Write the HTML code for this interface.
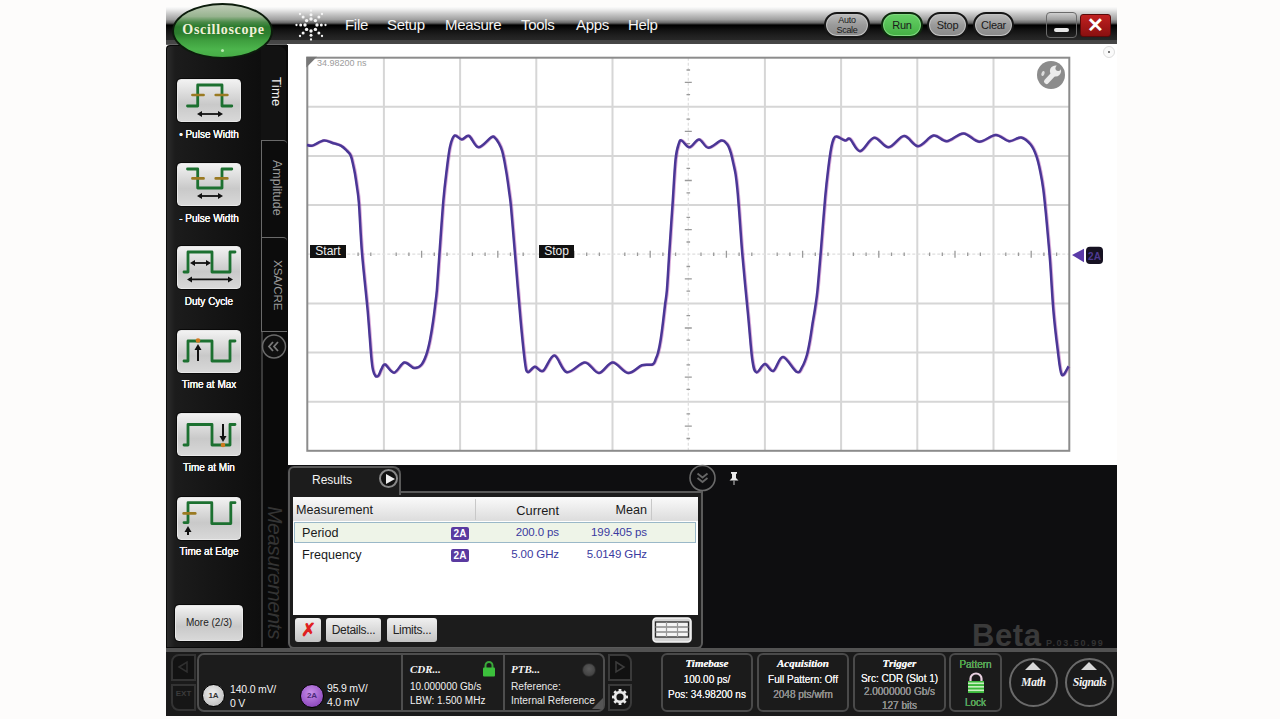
<!DOCTYPE html>
<html><head><meta charset="utf-8">
<style>
*{box-sizing:border-box}
html,body{margin:0;padding:0}
body{width:1280px;height:719px;background:#fdfcfb;position:relative;overflow:hidden;font-family:"Liberation Sans",sans-serif}
.a{position:absolute}
.menu{position:absolute;top:16px;color:#f4f4f4;font-size:15px;line-height:18px;letter-spacing:-0.3px}
.pill{position:absolute;top:12px;height:26px;border-radius:13px;border:2px solid #161616;background:linear-gradient(#bdbdbd,#9a9a9a 50%,#8a8a8a);box-shadow:inset 0 0 0 1px #c2c2c2;color:#1a1a1a;font-size:11px;text-align:center;line-height:22px;letter-spacing:-0.3px}
.mbtn{position:absolute;left:177px;width:64px;height:43px;border-radius:4px;background:linear-gradient(#f2f2f2,#c9c9c9 60%,#d8d8d8);border:1px solid #e8e8e8;box-shadow:0 0 0 1px #0a0a0a}
.mlab{position:absolute;left:160px;width:98px;text-align:center;color:#f4f4f4;font-size:10px;line-height:12px;text-shadow:0 0 0.6px #fff,0 0 0.3px #fff}
.vtab{position:absolute;color:#aaa;font-size:11px;transform-origin:0 0;transform:rotate(90deg);white-space:nowrap}
.box{position:absolute;top:653px;height:59px;border:2px solid #4a4a4a;border-radius:6px;background:#1b1b1b;color:#eee;font-size:10px;text-align:center;line-height:15px;text-shadow:0 0 0.5px #fff}
.hd{font-family:"Liberation Serif",serif;font-weight:bold;font-style:italic;font-size:11px;color:#f4f4f4}
.gr{color:#7c7c7c}
</style></head><body>

<!-- title bar -->
<div class="a" style="left:166px;top:7px;width:951px;height:38px;background:linear-gradient(#fbfbfb 0px,#f0f0f0 2px,#c8c8c8 7px,#a0a0a0 12.5px,#646464 16px,#1a1a1a 17.5px,#000 18.5px,#141414 24px,#202020 29px,#262626 32.5px,#444 33.5px,#474747 36.5px,#777 38px)"></div>
<!-- scope white area -->
<div class="a" style="left:287px;top:44px;width:830px;height:421px;background:#fff"></div>

<!-- left panel -->
<div class="a" style="left:166px;top:45px;width:122px;height:603px;background:#0a0a0a;border-radius:4px 0 0 0"></div>
<div class="a" style="left:167px;top:46px;width:94px;height:601px;background:linear-gradient(90deg,#2c2c2c,#1c1c1c 8px,#161616 40px,#0e0e0e 94px);border-radius:4px 0 0 0"></div>
<div class="a" style="left:261px;top:46px;width:26px;height:94px;background:#121212;border-radius:0 9px 0 0"></div>
<div class="a" style="left:261px;top:331px;width:1.5px;height:316px;background:#3a3a3a"></div>
<div class="a" style="left:286px;top:46px;width:2px;height:602px;background:#0a0a0a"></div>

<svg width="1280" height="719" style="position:absolute;left:0;top:0">
<path d="M383.9,57.7V450.8M460.1,57.7V450.8M536.3,57.7V450.8M612.5,57.7V450.8M764.9,57.7V450.8M841.1,57.7V450.8M917.3,57.7V450.8M993.5,57.7V450.8M307.3,106.8H1069.3M307.3,156.0H1069.3M307.3,205.1H1069.3M307.3,303.4H1069.3M307.3,352.5H1069.3M307.3,401.7H1069.3" stroke="#d6d6d6" stroke-width="2" fill="none"/>
<path d="M307.3,254.2H1069.3 M688.3,57.7V450.8" stroke="#dedede" stroke-width="1.2" stroke-dasharray="3,2" fill="none"/>
<path d="M320.0,252.4V256.1M332.7,252.4V256.1M345.4,250.8V257.8M358.1,252.4V256.1M370.8,252.4V256.1M396.2,252.4V256.1M408.9,252.4V256.1M421.6,250.8V257.8M434.3,252.4V256.1M447.0,252.4V256.1M472.4,252.4V256.1M485.1,252.4V256.1M497.8,250.8V257.8M510.5,252.4V256.1M523.2,252.4V256.1M548.6,252.4V256.1M561.3,252.4V256.1M574.0,250.8V257.8M586.7,252.4V256.1M599.4,252.4V256.1M624.8,252.4V256.1M637.5,252.4V256.1M650.2,250.8V257.8M662.9,252.4V256.1M675.6,252.4V256.1M701.0,252.4V256.1M713.7,252.4V256.1M726.4,250.8V257.8M739.1,252.4V256.1M751.8,252.4V256.1M777.2,252.4V256.1M789.9,252.4V256.1M802.6,250.8V257.8M815.3,252.4V256.1M828.0,252.4V256.1M853.4,252.4V256.1M866.1,252.4V256.1M878.8,250.8V257.8M891.5,252.4V256.1M904.2,252.4V256.1M929.6,252.4V256.1M942.3,252.4V256.1M955.0,250.8V257.8M967.7,252.4V256.1M980.4,252.4V256.1M1005.8,252.4V256.1M1018.5,252.4V256.1M1031.2,250.8V257.8M1043.9,252.4V256.1M1056.6,252.4V256.1M686.5,70.0H690.1M684.8,82.3H691.8M686.5,94.6H690.1M686.5,119.1H690.1M684.8,131.4H691.8M686.5,143.7H690.1M686.5,168.3H690.1M684.8,180.5H691.8M686.5,192.8H690.1M686.5,217.4H690.1M684.8,229.7H691.8M686.5,242.0H690.1M686.5,266.5H690.1M684.8,278.8H691.8M686.5,291.1H690.1M686.5,315.7H690.1M684.8,328.0H691.8M686.5,340.2H690.1M686.5,364.8H690.1M684.8,377.1H691.8M686.5,389.4H690.1M686.5,413.9H690.1M684.8,426.2H691.8M686.5,438.5H690.1" stroke="#9a9a9a" stroke-width="1.3" fill="none"/>
<rect x="307.3" y="57.7" width="762.0" height="393.1" fill="none" stroke="#8c8c8c" stroke-width="2"/>
<path d="M306.3,56.7H317L306.3,67.4Z" fill="#777"/>
<path d="M307.0,145.0 C307.9,145.1 309.7,146.3 312.5,145.6 C315.3,144.9 320.4,141.0 323.8,140.6 C327.1,140.2 329.7,142.2 332.5,143.0 C335.3,143.8 338.4,144.4 340.8,145.7 C343.2,147.0 345.1,149.0 346.7,150.6 C348.3,152.2 349.6,153.1 350.6,155.4 C351.7,157.7 352.3,161.1 353.0,164.2 C353.7,167.3 354.4,170.3 355.0,174.0 C355.6,177.7 356.2,181.7 356.9,186.6 C357.5,191.5 358.0,192.1 358.9,203.2 C359.8,214.3 360.5,235.0 362.0,253.0 C363.5,271.0 366.1,293.7 367.7,311.0 C369.2,328.3 370.4,347.2 371.3,357.0 C372.2,366.8 372.3,366.8 373.0,370.0 C373.7,373.2 374.6,375.1 375.5,376.0 C376.4,376.9 377.5,376.7 378.5,375.5 C379.5,374.3 380.4,370.8 381.5,369.0 C382.6,367.2 382.9,363.9 385.0,364.5 C387.1,365.1 390.8,373.0 394.0,372.7 C397.2,372.4 400.9,363.3 404.2,362.5 C407.5,361.7 411.2,367.6 414.0,368.0 C416.8,368.4 419.2,367.2 421.2,365.0 C423.2,362.8 424.7,359.2 426.2,355.0 C427.7,350.8 428.9,345.6 430.0,340.0 C431.1,334.4 432.3,326.9 433.1,321.3 C433.9,315.7 434.4,311.5 435.0,306.3 C435.6,301.1 436.1,298.9 436.9,290.0 C437.6,281.1 438.4,268.0 439.5,253.0 C440.6,238.0 442.2,213.8 443.4,200.0 C444.6,186.2 445.6,178.9 446.7,170.0 C447.8,161.1 448.7,152.4 450.0,146.7 C451.3,141.0 452.6,136.8 454.5,135.6 C456.4,134.4 459.3,139.4 461.7,139.5 C464.1,139.6 466.2,134.7 469.0,136.0 C471.8,137.3 474.7,147.1 478.4,147.3 C482.1,147.5 488.5,138.9 491.2,137.3 C493.9,135.7 493.3,136.6 494.6,137.6 C495.9,138.6 497.6,141.1 498.9,143.3 C500.2,145.6 501.3,148.1 502.2,151.1 C503.1,154.1 503.6,157.2 504.4,161.1 C505.1,165.0 505.9,169.6 506.7,174.4 C507.4,179.2 508.2,184.4 508.9,190.0 C509.6,195.6 510.1,197.1 511.1,207.8 C512.1,218.5 513.4,234.7 515.0,254.0 C516.6,273.3 519.2,305.5 520.9,323.6 C522.6,341.7 523.9,354.4 525.0,362.5 C526.1,370.6 526.2,371.5 527.8,372.2 C529.4,372.9 532.3,366.9 534.8,366.7 C537.3,366.5 539.8,372.8 543.0,370.9 C546.2,369.0 550.3,355.4 554.3,355.6 C558.3,355.8 561.7,371.1 566.8,372.2 C571.9,373.3 579.6,362.4 584.9,362.5 C590.2,362.6 594.2,373.0 598.8,373.0 C603.4,373.0 607.8,362.5 612.7,362.5 C617.6,362.5 623.1,372.5 628.0,373.0 C632.9,373.5 637.8,366.7 641.9,365.3 C646.0,363.9 650.2,365.5 652.5,364.5 C654.8,363.5 654.7,361.4 655.6,359.4 C656.5,357.4 657.3,355.7 658.1,352.5 C658.9,349.3 659.8,345.2 660.6,340.0 C661.4,334.8 662.4,327.1 663.1,321.3 C663.8,315.5 664.4,310.2 665.0,305.0 C665.6,299.8 666.2,298.5 666.9,290.0 C667.6,281.5 668.3,268.2 669.2,254.0 C670.1,239.8 671.4,220.8 672.5,205.0 C673.6,189.2 674.5,169.3 675.6,159.0 C676.7,148.7 677.9,146.5 678.9,143.4 C679.9,140.3 679.9,139.9 681.7,140.6 C683.5,141.2 686.6,147.5 689.5,147.3 C692.4,147.1 695.9,139.4 699.0,139.5 C702.1,139.6 704.7,147.6 708.4,147.8 C712.1,148.0 718.1,141.2 721.2,140.6 C724.3,140.0 725.6,142.5 727.2,144.4 C728.8,146.3 729.6,149.0 730.6,152.2 C731.6,155.3 732.5,159.6 733.3,163.3 C734.1,167.0 735.0,170.3 735.6,174.4 C736.2,178.5 736.7,182.2 737.2,187.8 C737.8,193.4 738.0,196.8 738.9,207.8 C739.8,218.8 740.8,236.1 742.3,254.0 C743.8,271.9 746.4,297.7 748.1,315.3 C749.8,332.9 750.9,350.3 752.3,359.8 C753.7,369.3 754.3,371.7 756.4,372.4 C758.5,373.1 762.0,364.2 764.8,364.0 C767.6,363.8 770.2,372.2 773.2,371.0 C776.2,369.8 779.0,356.8 782.9,357.0 C786.8,357.2 793.5,370.4 796.8,372.0 C800.1,373.6 800.8,369.1 802.5,366.3 C804.2,363.5 805.6,359.4 806.9,355.0 C808.1,350.6 809.1,345.2 810.0,340.0 C810.9,334.8 811.7,329.0 812.5,323.8 C813.3,318.6 814.2,314.4 815.0,308.8 C815.8,303.2 816.6,299.1 817.5,290.0 C818.4,280.9 819.3,269.5 820.6,254.0 C821.9,238.5 823.9,211.4 825.2,197.0 C826.5,182.6 827.4,175.4 828.4,167.3 C829.4,159.2 830.2,153.2 831.1,148.4 C832.0,143.6 832.9,140.4 833.9,138.4 C834.9,136.4 835.4,136.3 837.3,136.7 C839.1,137.1 842.9,140.2 845.0,140.6 C847.1,141.0 847.5,137.2 850.0,139.0 C852.5,140.8 856.0,151.4 860.0,151.2 C864.0,151.0 869.2,138.5 874.0,137.8 C878.8,137.2 883.5,147.6 888.5,147.3 C893.5,147.0 899.1,136.3 904.0,136.1 C908.9,135.9 913.1,146.3 918.0,146.2 C922.9,146.1 928.7,136.4 933.5,135.6 C938.3,134.8 941.7,141.6 946.7,141.2 C951.7,140.8 958.0,133.3 963.4,133.4 C968.8,133.5 973.6,141.4 979.0,141.7 C984.4,142.0 990.6,135.1 995.6,135.0 C1000.6,134.9 1004.8,140.8 1009.0,141.2 C1013.2,141.6 1017.4,136.9 1021.0,137.5 C1024.6,138.1 1028.0,141.4 1030.6,144.5 C1033.2,147.6 1034.8,151.6 1036.4,156.2 C1038.0,160.8 1039.2,166.3 1040.3,171.8 C1041.4,177.3 1042.4,182.5 1043.3,189.3 C1044.2,196.1 1045.0,204.6 1045.8,212.7 C1046.6,220.8 1047.4,229.9 1048.1,238.0 C1048.8,246.1 1049.2,249.6 1050.1,261.5 C1051.0,273.4 1052.1,294.9 1053.3,309.4 C1054.5,323.9 1056.1,337.4 1057.5,348.3 C1058.9,359.2 1059.9,371.7 1061.7,374.7 C1063.5,377.7 1067.4,367.8 1068.6,366.4" stroke="#b04ab0" stroke-width="3" fill="none" stroke-linejoin="round" transform="translate(0.7,0)" opacity="0.45"/>
<path d="M307.0,145.0 C307.9,145.1 309.7,146.3 312.5,145.6 C315.3,144.9 320.4,141.0 323.8,140.6 C327.1,140.2 329.7,142.2 332.5,143.0 C335.3,143.8 338.4,144.4 340.8,145.7 C343.2,147.0 345.1,149.0 346.7,150.6 C348.3,152.2 349.6,153.1 350.6,155.4 C351.7,157.7 352.3,161.1 353.0,164.2 C353.7,167.3 354.4,170.3 355.0,174.0 C355.6,177.7 356.2,181.7 356.9,186.6 C357.5,191.5 358.0,192.1 358.9,203.2 C359.8,214.3 360.5,235.0 362.0,253.0 C363.5,271.0 366.1,293.7 367.7,311.0 C369.2,328.3 370.4,347.2 371.3,357.0 C372.2,366.8 372.3,366.8 373.0,370.0 C373.7,373.2 374.6,375.1 375.5,376.0 C376.4,376.9 377.5,376.7 378.5,375.5 C379.5,374.3 380.4,370.8 381.5,369.0 C382.6,367.2 382.9,363.9 385.0,364.5 C387.1,365.1 390.8,373.0 394.0,372.7 C397.2,372.4 400.9,363.3 404.2,362.5 C407.5,361.7 411.2,367.6 414.0,368.0 C416.8,368.4 419.2,367.2 421.2,365.0 C423.2,362.8 424.7,359.2 426.2,355.0 C427.7,350.8 428.9,345.6 430.0,340.0 C431.1,334.4 432.3,326.9 433.1,321.3 C433.9,315.7 434.4,311.5 435.0,306.3 C435.6,301.1 436.1,298.9 436.9,290.0 C437.6,281.1 438.4,268.0 439.5,253.0 C440.6,238.0 442.2,213.8 443.4,200.0 C444.6,186.2 445.6,178.9 446.7,170.0 C447.8,161.1 448.7,152.4 450.0,146.7 C451.3,141.0 452.6,136.8 454.5,135.6 C456.4,134.4 459.3,139.4 461.7,139.5 C464.1,139.6 466.2,134.7 469.0,136.0 C471.8,137.3 474.7,147.1 478.4,147.3 C482.1,147.5 488.5,138.9 491.2,137.3 C493.9,135.7 493.3,136.6 494.6,137.6 C495.9,138.6 497.6,141.1 498.9,143.3 C500.2,145.6 501.3,148.1 502.2,151.1 C503.1,154.1 503.6,157.2 504.4,161.1 C505.1,165.0 505.9,169.6 506.7,174.4 C507.4,179.2 508.2,184.4 508.9,190.0 C509.6,195.6 510.1,197.1 511.1,207.8 C512.1,218.5 513.4,234.7 515.0,254.0 C516.6,273.3 519.2,305.5 520.9,323.6 C522.6,341.7 523.9,354.4 525.0,362.5 C526.1,370.6 526.2,371.5 527.8,372.2 C529.4,372.9 532.3,366.9 534.8,366.7 C537.3,366.5 539.8,372.8 543.0,370.9 C546.2,369.0 550.3,355.4 554.3,355.6 C558.3,355.8 561.7,371.1 566.8,372.2 C571.9,373.3 579.6,362.4 584.9,362.5 C590.2,362.6 594.2,373.0 598.8,373.0 C603.4,373.0 607.8,362.5 612.7,362.5 C617.6,362.5 623.1,372.5 628.0,373.0 C632.9,373.5 637.8,366.7 641.9,365.3 C646.0,363.9 650.2,365.5 652.5,364.5 C654.8,363.5 654.7,361.4 655.6,359.4 C656.5,357.4 657.3,355.7 658.1,352.5 C658.9,349.3 659.8,345.2 660.6,340.0 C661.4,334.8 662.4,327.1 663.1,321.3 C663.8,315.5 664.4,310.2 665.0,305.0 C665.6,299.8 666.2,298.5 666.9,290.0 C667.6,281.5 668.3,268.2 669.2,254.0 C670.1,239.8 671.4,220.8 672.5,205.0 C673.6,189.2 674.5,169.3 675.6,159.0 C676.7,148.7 677.9,146.5 678.9,143.4 C679.9,140.3 679.9,139.9 681.7,140.6 C683.5,141.2 686.6,147.5 689.5,147.3 C692.4,147.1 695.9,139.4 699.0,139.5 C702.1,139.6 704.7,147.6 708.4,147.8 C712.1,148.0 718.1,141.2 721.2,140.6 C724.3,140.0 725.6,142.5 727.2,144.4 C728.8,146.3 729.6,149.0 730.6,152.2 C731.6,155.3 732.5,159.6 733.3,163.3 C734.1,167.0 735.0,170.3 735.6,174.4 C736.2,178.5 736.7,182.2 737.2,187.8 C737.8,193.4 738.0,196.8 738.9,207.8 C739.8,218.8 740.8,236.1 742.3,254.0 C743.8,271.9 746.4,297.7 748.1,315.3 C749.8,332.9 750.9,350.3 752.3,359.8 C753.7,369.3 754.3,371.7 756.4,372.4 C758.5,373.1 762.0,364.2 764.8,364.0 C767.6,363.8 770.2,372.2 773.2,371.0 C776.2,369.8 779.0,356.8 782.9,357.0 C786.8,357.2 793.5,370.4 796.8,372.0 C800.1,373.6 800.8,369.1 802.5,366.3 C804.2,363.5 805.6,359.4 806.9,355.0 C808.1,350.6 809.1,345.2 810.0,340.0 C810.9,334.8 811.7,329.0 812.5,323.8 C813.3,318.6 814.2,314.4 815.0,308.8 C815.8,303.2 816.6,299.1 817.5,290.0 C818.4,280.9 819.3,269.5 820.6,254.0 C821.9,238.5 823.9,211.4 825.2,197.0 C826.5,182.6 827.4,175.4 828.4,167.3 C829.4,159.2 830.2,153.2 831.1,148.4 C832.0,143.6 832.9,140.4 833.9,138.4 C834.9,136.4 835.4,136.3 837.3,136.7 C839.1,137.1 842.9,140.2 845.0,140.6 C847.1,141.0 847.5,137.2 850.0,139.0 C852.5,140.8 856.0,151.4 860.0,151.2 C864.0,151.0 869.2,138.5 874.0,137.8 C878.8,137.2 883.5,147.6 888.5,147.3 C893.5,147.0 899.1,136.3 904.0,136.1 C908.9,135.9 913.1,146.3 918.0,146.2 C922.9,146.1 928.7,136.4 933.5,135.6 C938.3,134.8 941.7,141.6 946.7,141.2 C951.7,140.8 958.0,133.3 963.4,133.4 C968.8,133.5 973.6,141.4 979.0,141.7 C984.4,142.0 990.6,135.1 995.6,135.0 C1000.6,134.9 1004.8,140.8 1009.0,141.2 C1013.2,141.6 1017.4,136.9 1021.0,137.5 C1024.6,138.1 1028.0,141.4 1030.6,144.5 C1033.2,147.6 1034.8,151.6 1036.4,156.2 C1038.0,160.8 1039.2,166.3 1040.3,171.8 C1041.4,177.3 1042.4,182.5 1043.3,189.3 C1044.2,196.1 1045.0,204.6 1045.8,212.7 C1046.6,220.8 1047.4,229.9 1048.1,238.0 C1048.8,246.1 1049.2,249.6 1050.1,261.5 C1051.0,273.4 1052.1,294.9 1053.3,309.4 C1054.5,323.9 1056.1,337.4 1057.5,348.3 C1058.9,359.2 1059.9,371.7 1061.7,374.7 C1063.5,377.7 1067.4,367.8 1068.6,366.4" stroke="#4a3796" stroke-width="2.5" fill="none" stroke-linejoin="round"/>
</svg>

<!-- green ellipse -->
<div class="a" style="left:172px;top:3px;width:101px;height:56px;border-radius:50%;border:2.5px solid #0c1c0c;background:linear-gradient(#c0ccb8 0%,#98b490 22%,#4a8a48 33%,#2a7a2c 42%,#2c7e2e 55%,#3e9e3e 68%,#4cb44c 85%,#46ac46 100%);overflow:hidden">
  <div class="a" style="left:1.5px;top:16.5px;width:96px;text-align:center;font-family:'Liberation Serif',serif;font-weight:bold;font-size:14px;color:#f0f0d8;letter-spacing:0.7px;line-height:16px">Oscilloscope</div>
  <div class="a" style="left:47px;top:44px;width:3px;height:3px;border-radius:50%;background:#b8e8b0"></div>
</div>

<!-- spark logo -->
<svg class="a" style="left:295px;top:9px" width="32" height="34" viewBox="0 0 32 34">
 <g fill="#f4f4f4"><circle cx="22.0" cy="16.0" r="1.70"/><circle cx="26.3" cy="16.0" r="1.50"/><circle cx="30.5" cy="16.0" r="1.15"/><circle cx="20.4" cy="20.4" r="1.70"/><circle cx="23.9" cy="23.9" r="1.50"/><circle cx="27.0" cy="27.0" r="1.15"/><circle cx="16.0" cy="22.0" r="1.70"/><circle cx="16.0" cy="26.3" r="1.50"/><circle cx="16.0" cy="30.5" r="1.15"/><circle cx="11.6" cy="20.4" r="1.70"/><circle cx="8.1" cy="23.9" r="1.50"/><circle cx="5.0" cy="27.0" r="1.15"/><circle cx="10.0" cy="16.0" r="1.70"/><circle cx="5.7" cy="16.0" r="1.50"/><circle cx="1.5" cy="16.0" r="1.15"/><circle cx="11.6" cy="11.6" r="1.70"/><circle cx="8.1" cy="8.1" r="1.50"/><circle cx="5.0" cy="5.0" r="1.15"/><circle cx="16.0" cy="10.0" r="1.70"/><circle cx="16.0" cy="5.7" r="1.50"/><circle cx="16.0" cy="1.5" r="1.15"/><circle cx="20.4" cy="11.6" r="1.70"/><circle cx="23.9" cy="8.1" r="1.50"/><circle cx="27.0" cy="5.0" r="1.15"/></g>
</svg>

<!-- menu -->
<div class="menu" style="left:345px">File</div>
<div class="menu" style="left:387px">Setup</div>
<div class="menu" style="left:445px">Measure</div>
<div class="menu" style="left:521px">Tools</div>
<div class="menu" style="left:576px">Apps</div>
<div class="menu" style="left:628px">Help</div>

<!-- pills -->
<div class="pill" style="left:824px;width:46px;line-height:9.5px;padding-top:2px;font-size:9px">Auto<br>Scale</div>
<div class="pill" style="left:881px;width:42px;background:linear-gradient(#66d066,#44b044);border-color:#0e2a0e;box-shadow:inset 0 0 0 1px #80d880">Run</div>
<div class="pill" style="left:927px;width:41px">Stop</div>
<div class="pill" style="left:973px;width:41px">Clear</div>
<div class="a" style="left:1046px;top:12px;width:31px;height:26px;border-radius:4px;border:1.5px solid #6a6a6a"><div class="a" style="left:7px;top:15px;width:15px;height:4px;border-radius:2px;background:#e8e8e8"></div></div>
<div class="a" style="left:1080px;top:14px;width:31px;height:23px;border-radius:3px;background:linear-gradient(#c02020,#8a1010);border:1px solid #5a0a0a;color:#fff;font-size:20px;line-height:21px;text-align:center;font-weight:bold">&#10005;</div>
<div class="a" style="left:1103px;top:46px;width:12px;height:12px;border-radius:50%;border:1px solid #ddd;background:#fafafa"><div class="a" style="left:4px;top:4px;width:2px;height:2px;background:#777"></div></div>

<!-- wrench -->
<div class="a" style="left:1037px;top:61px;width:28px;height:28px;border-radius:50%;background:#8c8c8c"></div>
<svg class="a" style="left:1037px;top:61px" width="28" height="28" viewBox="0 0 28 28"><path d="M9.5,20.5 L17,12.5" stroke="#ececec" stroke-width="5" stroke-linecap="round"/><circle cx="18.5" cy="10" r="5.6" fill="#ececec"/><circle cx="21.2" cy="7.2" r="2.7" fill="#8c8c8c"/><ellipse cx="6" cy="12.5" rx="1.5" ry="2.6" fill="#dcdcdc" transform="rotate(20 6 12.5)"/></svg>

<!-- graticule label -->
<div class="a" style="left:317px;top:58px;font-size:9px;color:#9c9c9c;line-height:11px">34.98200 ns</div>
<div class="a" style="left:310px;top:245px;width:36px;height:13px;background:#111;color:#eee;font-size:12px;line-height:13px;text-align:center">Start</div>
<div class="a" style="left:539px;top:245px;width:35px;height:13px;background:#111;color:#eee;font-size:12px;line-height:13px;text-align:center">Stop</div>
<svg class="a" style="left:1070px;top:245px" width="36" height="22"><path d="M2,10 L14,3.8 L14,17.2 Z" fill="#5a3aa8"/><rect x="16" y="1.7" width="17" height="17.2" rx="4" fill="#161222"/><text x="24.5" y="14.5" font-size="10" fill="#4e3a92" text-anchor="middle" font-family="Liberation Sans" font-weight="bold">2A</text></svg>

<!-- left buttons -->
<div class="mbtn" style="top:79px"></div>
<svg class="a" style="left:177px;top:79px" width="64" height="43"><path d="M10.5,27H20.7V6H45V27H54.8" stroke="#1c7030" stroke-width="2.8" fill="none" stroke-linejoin="round" stroke-linecap="round"/><path d="M15.4,16H26.6 M38.7,16H50.4" stroke="#9a7a22" stroke-width="2.6" stroke-linecap="round"/><path d="M22,35H44" stroke="#111" stroke-width="1.8"/><path d="M20,35L25,32V38Z M46,35L41,32V38Z" fill="#111"/></svg>
<div class="mlab" style="top:129px">• Pulse Width</div>
<div class="mbtn" style="top:163px"></div>
<svg class="a" style="left:177px;top:163px" width="64" height="43"><path d="M10.5,6H20.7V25H45V6H54.8" stroke="#1c7030" stroke-width="2.8" fill="none" stroke-linejoin="round" stroke-linecap="round"/><path d="M15.4,15.4H26.6 M38.7,15.4H50.4" stroke="#9a7a22" stroke-width="2.6" stroke-linecap="round"/><path d="M22,33H44" stroke="#111" stroke-width="1.8"/><path d="M20,33L25,30V36Z M46,33L41,30V36Z" fill="#111"/></svg>
<div class="mlab" style="top:213px">- Pulse Width</div>
<div class="mbtn" style="top:246px"></div>
<svg class="a" style="left:177px;top:246px" width="64" height="43"><path d="M7,26H11V6H35V26H53V6H58" stroke="#1c7030" stroke-width="2.8" fill="none" stroke-linejoin="round" stroke-linecap="round"/><path d="M15,17H32" stroke="#111" stroke-width="1.8"/><path d="M13,17L18,14V20Z M34,17L29,14V20Z" fill="#111"/><path d="M12,33.4H54" stroke="#111" stroke-width="1.8"/><path d="M10,33.4L15,30.4V36.4Z M56,33.4L51,30.4V36.4Z" fill="#111"/></svg>
<div class="mlab" style="top:296px">Duty Cycle</div>
<div class="mbtn" style="top:330px"></div>
<svg class="a" style="left:177px;top:330px" width="64" height="43"><path d="M7,31H11V11H35V31H53V11H58" stroke="#1c7030" stroke-width="2.8" fill="none" stroke-linejoin="round" stroke-linecap="round"/><path d="M21,17V31" stroke="#111" stroke-width="2"/><path d="M21,14L17.5,20H24.5Z" fill="#111"/><circle cx="21" cy="10.5" r="2.3" fill="#d07a20"/></svg>
<div class="mlab" style="top:379px">Time at Max</div>
<div class="mbtn" style="top:413px"></div>
<svg class="a" style="left:177px;top:413px" width="64" height="43"><path d="M7,32H11V11.5H35V32H53V11.5H58" stroke="#1c7030" stroke-width="2.8" fill="none" stroke-linejoin="round" stroke-linecap="round"/><path d="M46,26V11" stroke="#111" stroke-width="2"/><path d="M46,29L42.5,23H49.5Z" fill="#111"/><circle cx="46" cy="32" r="2.3" fill="#d07a20"/></svg>
<div class="mlab" style="top:462px">Time at Min</div>
<div class="mbtn" style="top:497px"></div>
<svg class="a" style="left:177px;top:497px" width="64" height="43"><path d="M7,25.6H11V5.7H34.8V26.6H53.8V5.7H58" stroke="#1c7030" stroke-width="2.8" fill="none" stroke-linejoin="round" stroke-linecap="round"/><path d="M6.6,16.4H18.3" stroke="#9a7a22" stroke-width="2.6" stroke-linecap="round"/><path d="M11,32V38" stroke="#111" stroke-width="2"/><path d="M11,29L7.5,35H14.5Z" fill="#111"/></svg>
<div class="mlab" style="top:546px">Time at Edge</div>
<div class="mbtn" style="top:605px;left:175px;width:68px;height:36px;font-size:10px;color:#222;text-align:center;line-height:34px">More (2/3)</div>

<!-- tabs -->
<div class="vtab" style="left:284px;top:77px;color:#f0f0f0;font-size:13px;letter-spacing:0.3px">Time</div>
<div class="a" style="left:261px;top:140px;width:26px;height:98px;border:1.5px solid #6a6a6a;border-right:none;border-bottom:none;border-radius:0 4px 0 0;background:#0c0c0c"></div>
<div class="vtab" style="left:284px;top:160px;font-size:12.5px;color:#9a9a9a">Amplitude</div>
<div class="a" style="left:261px;top:237px;width:26px;height:95px;border:1.5px solid #6a6a6a;border-right:none;border-radius:0 4px 0 0;background:#0c0c0c"></div>
<div class="vtab" style="left:284px;top:260px;font-size:11.5px;color:#9a9a9a">XSA/CRE</div>
<svg class="a" style="left:260px;top:333px" width="28" height="28"><circle cx="14" cy="13.5" r="11.5" fill="#0f0f0f" stroke="#6a6a6a" stroke-width="1.5"/><path d="M13,9 L9,13.5 L13,18 M18,9 L14,13.5 L18,18" fill="none" stroke="#7a7a7a" stroke-width="1.8"/></svg>
<div class="vtab" style="left:287px;top:506px;font-size:21px;font-style:italic;color:#343434;letter-spacing:-0.5px">Measurements</div>

<!-- results area -->
<div class="a" style="left:287px;top:465px;width:830px;height:183px;background:#0e0e10"></div>
<div class="a" style="left:288px;top:493px;width:415px;height:156px;border:2px solid #5a5a5a;border-top:none;border-radius:0 0 6px 6px;background:#1c1c1c"></div>
<div class="a" style="left:288px;top:466px;width:113px;height:29px;border:2px solid #5a5a5a;border-bottom:none;border-radius:6px 8px 0 0;background:#1c1c1c"></div>
<div class="a" style="left:400px;top:491px;width:303px;height:2px;background:#5a5a5a"></div>
<div class="a" style="left:312px;top:472px;color:#f2f2f2;font-size:12px;line-height:16px">Results</div>
<div class="a" style="left:379px;top:469px;width:19px;height:19px;border-radius:50%;border:2px solid #888;background:#111"><div class="a" style="left:5px;top:3px;width:0;height:0;border-left:9px solid #eee;border-top:5px solid transparent;border-bottom:5px solid transparent"></div></div>
<svg class="a" style="left:688px;top:464px" width="29" height="29"><circle cx="14.5" cy="14" r="12.5" fill="#0e0e10" stroke="#6a6a6a" stroke-width="1.6"/><path d="M9.5,9.5 L14.5,13.5 L19.5,9.5 M9.5,14 L14.5,18 L19.5,14" fill="none" stroke="#666" stroke-width="1.8"/></svg>
<svg class="a" style="left:728px;top:471px" width="12" height="15"><path d="M3,1 H9 V2.5 L8,3 V7 L10.5,9.5 H1.5 L4,7 V3 L3,2.5 Z" fill="#e8e8e8"/><path d="M6,9.5 V14" stroke="#aaa" stroke-width="1.2"/></svg>

<!-- table -->
<div class="a" style="left:293px;top:497px;width:405px;height:118px;background:#fff"></div>
<div class="a" style="left:293px;top:497px;width:405px;height:24px;background:linear-gradient(#fafafa,#dcdcdc)"></div>
<div class="a" style="left:475px;top:499px;width:1px;height:21px;background:#c8c8c8"></div>
<div class="a" style="left:651px;top:499px;width:1px;height:21px;background:#c8c8c8"></div>
<div class="a" style="left:296px;top:503px;font-size:12.6px;color:#1a1a1a">Measurement</div>
<div class="a" style="left:495px;top:503px;width:64px;text-align:right;font-size:12.8px;color:#1a1a1a">Current</div>
<div class="a" style="left:590px;top:503px;width:57px;text-align:right;font-size:12.6px;color:#1a1a1a">Mean</div>
<div class="a" style="left:294px;top:522px;width:402px;height:21px;background:#eef4e8;border:1px solid #9ab8c8"></div>
<div class="a" style="left:302px;top:526px;font-size:12.6px;color:#1a1a1a">Period</div>
<div class="a" style="left:302px;top:548px;font-size:12.6px;color:#1a1a1a">Frequency</div>
<div class="a" style="left:451px;top:527px;width:18px;height:13px;background:#5a3aa0;border-radius:2px;color:#fff;font-size:10px;line-height:13px;text-align:center;font-weight:bold">2A</div>
<div class="a" style="left:451px;top:549px;width:18px;height:13px;background:#5a3aa0;border-radius:2px;color:#fff;font-size:10px;line-height:13px;text-align:center;font-weight:bold">2A</div>
<div class="a" style="left:490px;top:526px;width:69px;text-align:right;font-size:11.5px;color:#3a3aa0;letter-spacing:-0.1px">200.0 ps</div>
<div class="a" style="left:570px;top:526px;width:77px;text-align:right;font-size:11.5px;color:#3a3aa0;letter-spacing:-0.1px">199.405 ps</div>
<div class="a" style="left:490px;top:548px;width:69px;text-align:right;font-size:11.5px;color:#3a3aa0;letter-spacing:-0.1px">5.00 GHz</div>
<div class="a" style="left:570px;top:548px;width:77px;text-align:right;font-size:11.5px;color:#3a3aa0;letter-spacing:-0.1px">5.0149 GHz</div>

<!-- result buttons -->
<div class="a" style="left:295px;top:618px;width:26px;height:24px;border-radius:3px;background:linear-gradient(#f0f0f0,#c4c4c4);color:#e02020;font-size:18px;font-weight:bold;line-height:24px;text-align:center">&#10007;</div>
<div class="a" style="left:326px;top:618px;width:55px;height:24px;border-radius:3px;background:linear-gradient(#f0f0f0,#c4c4c4);color:#222;font-size:12px;line-height:24px;text-align:center;letter-spacing:-0.3px">Details...</div>
<div class="a" style="left:387px;top:618px;width:50px;height:24px;border-radius:3px;background:linear-gradient(#f0f0f0,#c4c4c4);color:#222;font-size:12px;line-height:24px;text-align:center;letter-spacing:-0.3px">Limits...</div>
<svg class="a" style="left:652px;top:617px" width="40" height="26"><rect x="1" y="1" width="38" height="24" rx="3.5" fill="#d4d4d4" stroke="#f4f4f4" stroke-width="1.6"/><rect x="3.5" y="5" width="33" height="15" fill="#f4f4f4" stroke="#2a2a2a" stroke-width="1.3"/><path d="M3.5,10H36.5M3.5,15H36.5" stroke="#888" stroke-width="1.4"/><path d="M14.5,5V20M25.5,5V20" stroke="#999" stroke-width="1.2"/></svg>

<!-- beta -->
<div class="a" style="left:972px;top:619px;font-size:31px;font-weight:bold;color:#3a3a3a;line-height:34px;letter-spacing:0.6px">Beta</div>
<div class="a" style="left:1046px;top:638px;font-size:9px;color:#333;letter-spacing:1.6px;font-weight:bold">P.03.50.99</div>

<!-- bottom bar -->
<div class="a" style="left:166px;top:648px;width:951px;height:68px;background:#1a1a1a;border-top:4px solid #525252"></div>
<div class="a" style="left:171px;top:654px;width:25px;height:27px;border:2px solid #333;border-radius:8px 0 0 0;background:#121212"></div>
<svg class="a" style="left:176px;top:660px" width="14" height="14"><path d="M3,7 L11,2 L11,12 Z" fill="none" stroke="#303030" stroke-width="1.5"/></svg>
<div class="a" style="left:171px;top:684px;width:25px;height:27px;border:2px solid #333;border-radius:0 0 0 8px;background:#161616;color:#3c3c3c;font-size:8px;line-height:16px;text-align:center;font-weight:bold">EXT</div>
<div class="a" style="left:197px;top:653px;width:408px;height:59px;border:2px solid #4e4e4e;border-radius:7px;background:#1c1c1c"></div>
<div class="a" style="left:401px;top:655px;width:2px;height:55px;background:#4e4e4e"></div>
<div class="a" style="left:503px;top:655px;width:2px;height:55px;background:#4e4e4e"></div>
<div class="a" style="left:202px;top:684px;width:23px;height:23px;border-radius:50%;background:radial-gradient(circle at 45% 40%,#f0f0f0,#c4c4c4 70%,#a8a8a8);border:1px solid #000;color:#333;font-size:8px;line-height:21px;text-align:center;font-weight:bold">1A</div>
<div class="a" style="left:230px;top:682px;color:#f4f4f4;font-size:10.5px;line-height:14px;letter-spacing:-0.2px">140.0 mV/<br>0 V</div>
<div class="a" style="left:300px;top:684px;width:24px;height:24px;border-radius:50%;background:radial-gradient(circle at 45% 35%,#c890e8,#9a58c8 60%,#7a3aa8);border:1px solid #000;color:#4a2a78;font-size:8px;line-height:22px;text-align:center;font-weight:bold">2A</div>
<div class="a" style="left:327px;top:681px;color:#f4f4f4;font-size:10.5px;line-height:14px;letter-spacing:-0.2px">95.9 mV/<br>4.0 mV</div>
<div class="a hd" style="left:410px;top:662px;font-size:11px;line-height:14px">CDR...</div>
<svg class="a" style="left:481px;top:660px" width="16" height="18"><path d="M4.5,8 V5.5 A3.5,3.5 0 0 1 11.5,5.5 V8" fill="none" stroke="#3aa83a" stroke-width="2"/><rect x="2" y="7.5" width="12" height="9" rx="1" fill="#3cc03c"/></svg>
<div class="a" style="left:410px;top:679.5px;color:#f2f2f2;font-size:10px;line-height:14.5px">10.000000 Gb/s<br>LBW: 1.500 MHz</div>
<div class="a hd" style="left:511px;top:662px;font-size:11px;line-height:14px">PTB...</div>
<div class="a" style="left:582px;top:663px;width:14px;height:14px;border-radius:50%;background:radial-gradient(circle at 50% 40%,#5a5a5a,#3a3a3a);border:1px solid #2a2a2a"></div>
<div class="a" style="left:511px;top:679.5px;color:#e8e8e8;font-size:10.2px;line-height:14.5px">Reference:<br>Internal Reference</div>
<svg class="a" style="left:590px;top:696px" width="14" height="14"><path d="M13,2 L13,13 L2,13 Z" fill="#555"/></svg>
<div class="a" style="left:608px;top:654px;width:24px;height:27px;border:2px solid #3a3a3a;border-radius:0 8px 0 0;background:#111"></div>
<svg class="a" style="left:613px;top:660px" width="14" height="14"><path d="M3,2 L11,7 L3,12 Z" fill="none" stroke="#3c3c3c" stroke-width="1.5"/></svg>
<div class="a" style="left:608px;top:684px;width:24px;height:27px;border:2px solid #3a3a3a;border-radius:0 0 8px 0;background:#161616"></div>
<svg class="a" style="left:611px;top:688px" width="18" height="18" viewBox="0 0 18 18"><g fill="#e8e8e8"><circle cx="9" cy="9" r="6.2"/><rect x="7.6" y="1" width="2.8" height="16"/><rect x="1" y="7.6" width="16" height="2.8"/><rect x="7.6" y="1" width="2.8" height="16" transform="rotate(45 9 9)"/><rect x="7.6" y="1" width="2.8" height="16" transform="rotate(-45 9 9)"/></g><circle cx="9" cy="9" r="3.6" fill="#161616"/></svg>

<div class="box" style="left:661px;width:92px;padding-top:1px;line-height:15.5px"><div class="hd">Timebase</div>100.00 ps/<br>Pos: 34.98200 ns</div>
<div class="box" style="left:757px;width:92px;padding-top:1px;line-height:15.5px"><div class="hd">Acquisition</div>Full Pattern: Off<br><span class="gr">2048 pts/wfm</span></div>
<div class="box" style="left:853px;width:93px;line-height:13.5px;padding-top:2px"><div class="hd" style="margin-bottom:1px">Trigger</div>Src: CDR (Slot 1)<br><span class="gr">2.0000000 Gb/s<br>127 bits</span></div>
<div class="box" style="left:949px;width:53px;color:#2aa02a;line-height:14px"><div style="padding-top:3px">Pattern</div><div style="height:24px"></div>Lock</div>
<svg class="a" style="left:965px;top:672px" width="22" height="22" viewBox="0 0 22 22"><path d="M5.5,9 V6.5 A5.5,5 0 0 1 16.5,6.5 V9" fill="none" stroke="#e8d0e0" stroke-width="2.2"/><rect x="3" y="9" width="16" height="12" fill="#3ab83a"/><g fill="#c8f0c0"><rect x="3" y="10.5" width="16" height="1.6"/><rect x="3" y="14" width="16" height="1.6"/><rect x="3" y="17.5" width="16" height="1.6"/></g></svg>

<div class="a" style="left:1009px;top:658px;width:49px;height:49px;border-radius:50%;border:2px solid #6a6a6a;background:#1a1a1a"></div>
<svg class="a" style="left:1024px;top:661px" width="18" height="10"><path d="M1,9 L9,1 L17,9 Z" fill="#d8d8d8"/></svg>
<div class="a hd" style="left:1009px;top:675px;width:49px;text-align:center;font-size:11.5px;line-height:14px;letter-spacing:-0.3px">Math</div>
<div class="a" style="left:1065px;top:658px;width:49px;height:49px;border-radius:50%;border:2px solid #6a6a6a;background:#1a1a1a"></div>
<svg class="a" style="left:1080px;top:661px" width="18" height="10"><path d="M1,9 L9,1 L17,9 Z" fill="#d8d8d8"/></svg>
<div class="a hd" style="left:1065px;top:675px;width:49px;text-align:center;font-size:11.8px;line-height:14px;letter-spacing:-0.4px">Signals</div>

</body></html>
